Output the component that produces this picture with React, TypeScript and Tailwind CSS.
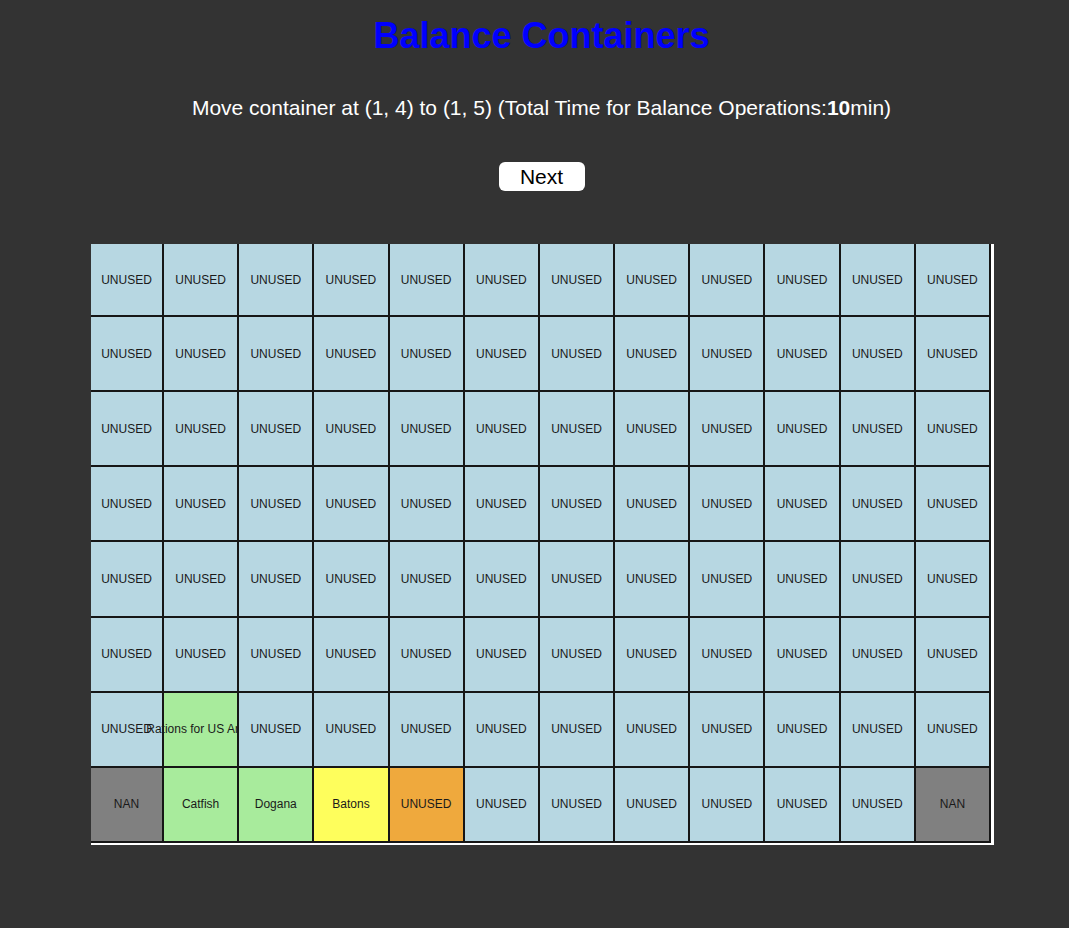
import React from 'react';

type Cell = { label: string; kind: 'unused' | 'nan' | 'green' | 'yellow' | 'orange' };

const cellColors: Record<Cell['kind'], string> = {
  unused: 'bg-[#b7d7e2]',
  nan: 'bg-[#808080]',
  green: 'bg-[#a8eb9c]',
  yellow: 'bg-[#fefe5c]',
  orange: 'bg-[#efa93d]',
};

function buildGrid(): Cell[][] {
  const rows: Cell[][] = [];
  for (let r = 0; r < 8; r++) {
    const row: Cell[] = [];
    for (let c = 0; c < 12; c++) row.push({ label: 'UNUSED', kind: 'unused' });
    rows.push(row);
  }
  // row 7 (second from bottom)
  rows[6][1] = { label: 'Rations for US Army', kind: 'green' };
  // bottom row
  rows[7][0] = { label: 'NAN', kind: 'nan' };
  rows[7][1] = { label: 'Catfish', kind: 'green' };
  rows[7][2] = { label: 'Dogana', kind: 'green' };
  rows[7][3] = { label: 'Batons', kind: 'yellow' };
  rows[7][4] = { label: 'UNUSED', kind: 'orange' };
  rows[7][11] = { label: 'NAN', kind: 'nan' };
  return rows;
}

export default function App() {
  const grid = buildGrid();

  return (
    <div className="min-h-screen w-full overflow-hidden bg-[#333333] font-['Liberation_Sans',Arial,sans-serif]">
      <div className="w-[1083px] flex flex-col items-center">
        <h1 className="mt-[14px] text-[36px] leading-[44px] font-bold text-[#0000ff]">Balance Containers</h1>

        <p className="mt-[37px] text-[21px] leading-[25px] text-white">
          Move container at (1, 4) to (1, 5) (Total Time for Balance Operations:<b>10</b>min)
        </p>

        <button className="mt-[42px] h-[29px] w-[86px] rounded-[6px] bg-white text-[21px] leading-[25px] text-black">
          Next
        </button>

        {/* Bay grid */}
        <div className="mt-[53px] ml-[2px] bg-white pr-[3px] pb-[2px]">
          <div className="grid h-[599px] w-[900px] grid-cols-[73px_repeat(11,minmax(0,1fr))] grid-rows-[73px_repeat(7,minmax(0,1fr))]">
            {grid.map((row, r) =>
              row.map((cell, c) => (
                <div
                  key={`${r}-${c}`}
                  className={`flex min-w-0 items-center justify-center whitespace-nowrap border-r-2 border-b-2 border-[#161616] text-[12px] text-[#1a1a1a] ${cellColors[cell.kind]}`}
                >
                  {cell.label}
                </div>
              ))
            )}
          </div>
        </div>
      </div>
    </div>
  );
}
